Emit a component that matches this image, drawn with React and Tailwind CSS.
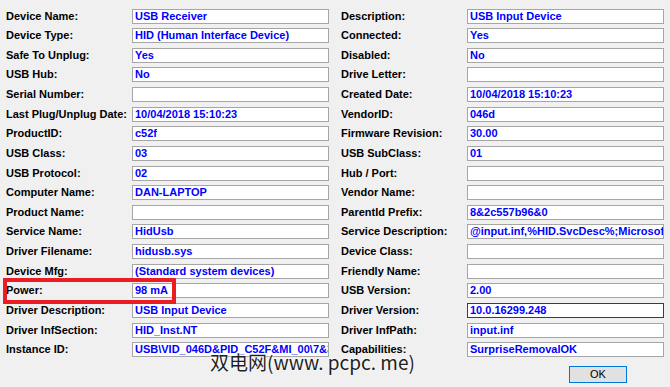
import React from 'react'

const left = [
  ['Device Name:', 'USB Receiver'],
  ['Device Type:', 'HID (Human Interface Device)'],
  ['Safe To Unplug:', 'Yes'],
  ['USB Hub:', 'No'],
  ['Serial Number:', ''],
  ['Last Plug/Unplug Date:', '10/04/2018 15:10:23'],
  ['ProductID:', 'c52f'],
  ['USB Class:', '03'],
  ['USB Protocol:', '02'],
  ['Computer Name:', 'DAN-LAPTOP'],
  ['Product Name:', ''],
  ['Service Name:', 'HidUsb'],
  ['Driver Filename:', 'hidusb.sys'],
  ['Device Mfg:', '(Standard system devices)'],
  ['Power:', '98 mA'],
  ['Driver Description:', 'USB Input Device'],
  ['Driver InfSection:', 'HID_Inst.NT'],
  ['Instance ID:', 'USB\\VID_046D&PID_C52F&MI_00\\7&3'],
]

const right = [
  ['Description:', 'USB Input Device'],
  ['Connected:', 'Yes'],
  ['Disabled:', 'No'],
  ['Drive Letter:', ''],
  ['Created Date:', '10/04/2018 15:10:23'],
  ['VendorID:', '046d'],
  ['Firmware Revision:', '30.00'],
  ['USB SubClass:', '01'],
  ['Hub / Port:', ''],
  ['Vendor Name:', ''],
  ['ParentId Prefix:', '8&2c557b96&0'],
  ['Service Description:', '@input.inf,%HID.SvcDesc%;Microsoft'],
  ['Device Class:', ''],
  ['Friendly Name:', ''],
  ['USB Version:', '2.00'],
  ['Driver Version:', '10.0.16299.248', true],
  ['Driver InfPath:', 'input.inf'],
  ['Capabilities:', 'SurpriseRemovalOK'],
]

function Column({ rows }) {
  return (
    <div className="grid grid-cols-[126px_197px] gap-y-[4.64px]">
      {rows.map(([label, value, focused]) => (
        <React.Fragment key={label}>
          <div className="h-[15px] flex items-center text-[11px] font-bold text-black leading-none whitespace-nowrap">
            {label}
          </div>
          <div
            className={`h-[15px] bg-white border flex items-center pl-[2px] overflow-hidden whitespace-nowrap text-[11px] font-bold leading-none text-[#0000ff] ${
              focused ? 'border-[#3c3c3c]' : 'border-[#a6a6a6]'
            }`}
          >
            {value}
          </div>
        </React.Fragment>
      ))}
    </div>
  )
}

export default function App() {
  return (
    <div
      className="relative w-[670px] h-[387px] bg-[#f0f0f0] overflow-hidden"
      style={{ fontFamily: '"Liberation Sans", Arial, sans-serif' }}
    >
      <div className="flex gap-3 pl-[6px] pt-[8.5px]">
        <Column rows={left} />
        <Column rows={right} />
      </div>

      <div className="flex justify-end pr-[43px] mt-[8.7px]">
        <button className="w-[58px] h-[17px] border border-[#0078d7] bg-[#e1e1e1] text-[11px] text-black leading-none flex items-center justify-center">
          OK
        </button>
      </div>

      {/* annotation */}
      <div className="absolute left-[3px] top-[278px] w-[173px] h-[26px] border-4 border-[#ea1c24]" />

      {/* watermark */}
      <div
        className="absolute left-[210px] top-[351px] text-[19px] leading-[22px] text-[#1e1e1e] whitespace-nowrap"
        style={{
          fontFamily: '"Noto Sans CJK SC", sans-serif',
          textShadow: '0 0 2px #fff, 0 0 2px #fff',
        }}
      >
        双电网(www. pcpc. me)
      </div>
    </div>
  )
}
